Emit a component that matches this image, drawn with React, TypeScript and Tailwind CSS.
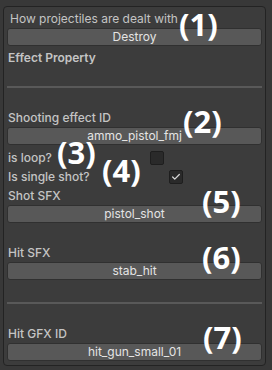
import { Check } from "lucide-react";

function Label({ children, weight = "font-medium" }: { children: React.ReactNode; weight?: string }) {
  return (
    <div className={`h-[19px] leading-[19px] text-[12px] text-[#c4c4c4] ${weight}`}>
      {children}
    </div>
  );
}

function Field({ value }: { value: string }) {
  return (
    <div className="h-[18px] rounded-[3px] border border-[#303030] bg-[#585858] text-center text-[12px] leading-[16px] text-[#e4e4e4]">
      {value}
    </div>
  );
}

function Divider() {
  return <div className="h-[2px] bg-[#595959]" />;
}

function Tag({ n, className }: { n: number; className: string }) {
  return (
    <span
      className={`absolute text-[31px] font-bold leading-none text-white ${className}`}
      style={{ fontFamily: '"Open Sans", sans-serif' }}
    >
      ({n})
    </span>
  );
}

export default function App() {
  return (
    <div
      className="relative h-[370px] w-[272px] bg-[#383838] pt-[6px] pl-[3px] pr-[6px]"
      style={{ fontFamily: "Inter, sans-serif" }}
    >
      <div className="h-[360px] rounded-[4px] border border-[#232323] bg-[#3c3c3c] px-[3px] pt-[2px]">
        <div className="pl-[3px]">
          <Label weight="font-normal">How projectiles are dealt with</Label>
        </div>
        <Field value="Destroy" />
        <div className="mt-[2px] pl-[1px]">
          <Label weight="font-semibold">Effect Property</Label>
        </div>
        <div className="mt-[19px]">
          <Divider />
        </div>
        <div className="mt-[20px] pl-[1px]">
          <Label>Shooting effect ID</Label>
        </div>
        <Field value="ammo_pistol_fmj" />
        <div className="mt-[3px] flex items-center pl-[1px]">
          <Label>is loop?</Label>
          <div className="ml-[98px] h-[14px] w-[14px] rounded-[2px] border border-[#1e1e1e] bg-[#2a2a2a]" />
        </div>
        <div className="flex items-center pl-[1px]">
          <Label>Is single shot?</Label>
          <div className="ml-[79px] flex h-[14px] w-[14px] items-center justify-center rounded-[2px] border border-[#1e1e1e] bg-[#2a2a2a]">
            <Check size={10} strokeWidth={3} className="text-[#d8d8d8]" />
          </div>
        </div>
        <div className="pl-[1px]">
          <Label>Shot SFX</Label>
        </div>
        <Field value="pistol_shot" />
        <div className="mt-[20px] pl-[1px]">
          <Label>Hit SFX</Label>
        </div>
        <Field value="stab_hit" />
        <div className="mt-[22px]">
          <Divider />
        </div>
        <div className="mt-[20px] pl-[1px]">
          <Label>Hit GFX ID</Label>
        </div>
        <Field value="hit_gun_small_01" />
      </div>

      <Tag n={1} className="left-[179px] top-[9px]" />
      <Tag n={2} className="left-[183px] top-[106px]" />
      <Tag n={3} className="left-[57px] top-[137px]" />
      <Tag n={4} className="left-[102px] top-[155px]" />
      <Tag n={5} className="left-[202px] top-[186px]" />
      <Tag n={6} className="left-[202px] top-[242px]" />
      <Tag n={7} className="left-[203px] top-[322px]" />
    </div>
  );
}
